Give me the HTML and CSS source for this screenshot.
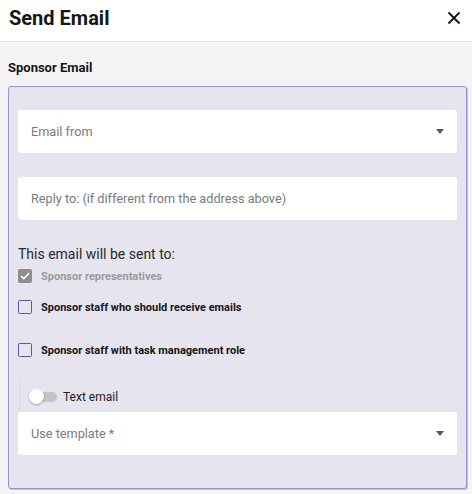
FILE: index.html
```html
<!DOCTYPE html>
<html lang="en">
<head>
<meta charset="utf-8">
<title>Send Email</title>
<link rel="stylesheet" href="styles.css">
</head>
<body>
<div class="dialog">
  <header class="dialog-head">
    <h1 class="dialog-title">Send Email</h1>
    <button class="close-btn" aria-label="Close">
      <svg width="14" height="14" viewBox="0 0 14 14"><path d="M1.5 1.5 L12.5 12.5 M12.5 1.5 L1.5 12.5" stroke="#111" stroke-width="1.8" fill="none"/></svg>
    </button>
  </header>
  <main class="dialog-body">
    <h2 class="section-title">Sponsor Email</h2>
    <section class="panel">
      <div class="field select">
        <span class="placeholder">Email from</span>
        <span class="caret"></span>
      </div>
      <div class="field">
        <span class="placeholder">Reply to: (if different from the address above)</span>
      </div>
      <p class="recipients-label">This email will be sent to:</p>
      <label class="check disabled">
        <span class="box checked">
          <svg width="10" height="8" viewBox="0 0 10 8"><path d="M1 4 L3.8 6.6 L9 1.2" stroke="#fff" stroke-width="1.6" fill="none"/></svg>
        </span>
        <span class="check-text">Sponsor representatives</span>
      </label>
      <label class="check">
        <span class="box"></span>
        <span class="check-text">Sponsor staff who should receive emails</span>
      </label>
      <label class="check spaced">
        <span class="box"></span>
        <span class="check-text">Sponsor staff with task management role</span>
      </label>
      <div class="toggle-row">
        <span class="switch"><span class="knob"></span></span>
        <span class="toggle-text">Text email</span>
      </div>
      <div class="field select">
        <span class="placeholder">Use template *</span>
        <span class="caret"></span>
      </div>
    </section>
  </main>
</div>
</body>
</html>
```
FILE: styles.css
```css
* { box-sizing: border-box; }

html, body {
  margin: 0;
  padding: 0;
  height: 100%;
}

body {
  font-family: Roboto, "Noto Sans", sans-serif;
  background: #f4f4f6;
  color: #222;
}

.dialog {
  display: flex;
  flex-direction: column;
  min-height: 100%;
}

.dialog-head {
  display: flex;
  align-items: center;
  justify-content: space-between;
  height: 42px;
  padding: 0 11px 0 9px;
  background: #fff;
  border-bottom: 1px solid #e4e4e8;
}

.dialog-title {
  margin: 0;
  font-size: 20px;
  font-weight: 700;
  color: #161616;
  position: relative;
  top: -3px;
}

.close-btn {
  border: 0;
  background: none;
  padding: 0;
  width: 14px;
  height: 14px;
  display: flex;
  position: relative;
  top: -3px;
}

.dialog-body {
  padding: 17px 5px 6px 8px;
}

.section-title {
  margin: 0 0 9px;
  font-size: 13px;
  font-weight: 700;
  color: #161616;
  line-height: 18px;
}

.panel {
  background: #e6e4ef;
  border: 1px solid #a28ccf;
  border-radius: 3px;
  box-shadow: 1px 1px 0 #c9bde0;
  padding: 23px 9px 33px 9px;
  display: flex;
  flex-direction: column;
}

.field {
  height: 43px;
  background: #fff;
  border-radius: 3px;
  display: flex;
  align-items: center;
  padding: 0 13px;
  margin-bottom: 24px;
}

.field:last-child { margin-bottom: 0; }

.placeholder {
  font-size: 12.7px;
  color: #7a7a7a;
  flex: 1;
}

.caret {
  width: 0;
  height: 0;
  border-left: 4.5px solid transparent;
  border-right: 4.5px solid transparent;
  border-top: 5px solid #555;
  margin-right: 0;
}

.recipients-label {
  margin: 0 0 4px;
  font-size: 14px;
  color: #2a2a2a;
  line-height: 20px;
}

.check {
  display: flex;
  align-items: center;
  gap: 9px;
  height: 16px;
  margin-bottom: 15px;
}

.check.spaced { margin-top: 12px; margin-bottom: 0; }

.box {
  width: 14px;
  height: 14px;
  border: 1.5px solid #6c4fa8;
  border-radius: 1.5px;
  display: flex;
  align-items: center;
  justify-content: center;
  background: transparent;
}

.box.checked {
  background: #8d8d8f;
  border-color: #8d8d8f;
}

.check-text {
  font-size: 11px;
  font-weight: 700;
  color: #161616;
}

.check.disabled .check-text { color: #9a9a9c; }

.toggle-row {
  display: flex;
  align-items: center;
  gap: 6px;
  height: 30px;
  margin-top: 24px;
  padding-left: 9px;
  border-left: 1px solid #d8d6e0;
  margin-left: 1px;
}

.switch {
  position: relative;
  width: 28px;
  height: 14px;
  display: block;
}

.switch::before {
  content: "";
  position: absolute;
  left: 6px;
  top: 2px;
  width: 22px;
  height: 10px;
  border-radius: 5px;
  background: #c4c4c6;
}

.knob {
  position: absolute;
  left: 0;
  top: -1px;
  width: 15px;
  height: 15px;
  border-radius: 50%;
  background: #fff;
  box-shadow: 0 1px 2px rgba(0,0,0,0.3);
}

.toggle-text {
  font-size: 12px;
  color: #222;
}
```
